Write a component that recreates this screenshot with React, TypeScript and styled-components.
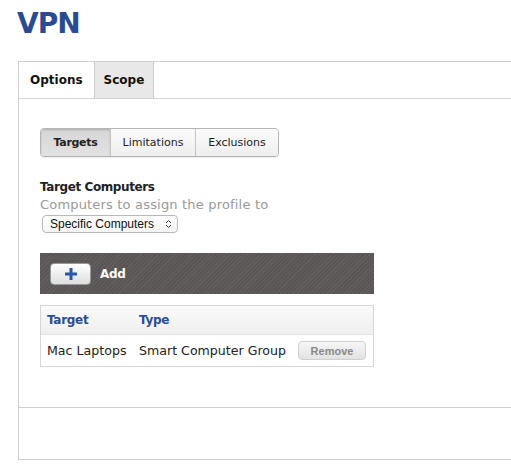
import React from "react";
import styled, { createGlobalStyle } from "styled-components";

const Global = createGlobalStyle`
  html, body { margin: 0; padding: 0; background: #fff; overflow: hidden; }
  body { font-family: "DejaVu Sans", "Open Sans", sans-serif; color: #222; }
`;

const Page = styled.div`
  width: 511px;
  height: 468px;
  overflow: hidden;
`;

const Title = styled.h1`
  margin: 0;
  padding: 9px 0 0 17px;
  height: 61px;
  box-sizing: border-box;
  font-family: "DejaVu Sans", sans-serif;
  font-weight: bold;
  font-size: 28px;
  line-height: 30px;
  color: #2a4b93;
  letter-spacing: -1px;
`;

const Panel = styled.div`
  margin-left: 18px;
  width: 620px;
  border: 1px solid #cfcfcf;
  box-sizing: border-box;
`;

const TabBar = styled.div`
  display: flex;
  height: 37px;
  border-bottom: 1px solid #d4d4d4;
  box-sizing: border-box;
`;

const Tab = styled.div<{ $active?: boolean }>`
  display: flex;
  align-items: center;
  padding: 0 ${(p) => (p.$active ? "11px" : "9px")};
  font-size: 12px;
  font-weight: bold;
  color: #111;
  background: ${(p) => (p.$active ? "#fff" : "#e8e8e8")};
  border-right: 1px solid #cfcfcf;
`;

const Content = styled.div`
  padding: 29px 21px 40px 21px;
  width: 334px;
`;

const Segmented = styled.div`
  display: inline-flex;
  height: 29px;
  border: 1px solid #b5b5b5;
  border-radius: 4px;
  overflow: hidden;
  box-sizing: border-box;
  box-shadow: 0 1px 1px rgba(0, 0, 0, 0.08);
`;

const Segment = styled.div<{ $active?: boolean; $w: number }>`
  width: ${(p) => p.$w}px;
  display: flex;
  align-items: center;
  justify-content: center;
  font-size: 11px;
  font-weight: ${(p) => (p.$active ? "bold" : "normal")};
  letter-spacing: ${(p) => (p.$active ? "-0.3px" : "0")};
  color: #222;
  background: ${(p) =>
    p.$active ? "linear-gradient(#d6d6d6, #e2e2e2)" : "linear-gradient(#fbfbfb, #eeeeee)"};
  box-shadow: ${(p) => (p.$active ? "inset 0 1px 2px rgba(0,0,0,0.18)" : "none")};
  & + & {
    border-left: 1px solid #c4c4c4;
  }
`;

const FieldLabel = styled.div`
  margin-top: 22px;
  font-size: 12px;
  font-weight: bold;
  letter-spacing: -0.4px;
  color: #222;
  line-height: 17px;
`;

const FieldHint = styled.div`
  font-size: 13px;
  letter-spacing: 0.18px;
  color: #999;
  line-height: 17px;
`;

const Select = styled.div`
  margin: 2px 0 0 2px;
  width: 136px;
  height: 18px;
  box-sizing: border-box;
  border: 1px solid #b9b9b9;
  border-radius: 4px;
  background: linear-gradient(#fff, #f4f4f4);
  display: flex;
  align-items: center;
  justify-content: space-between;
  padding: 0 5px 0 7px;
  font-family: "Liberation Sans", Arial, sans-serif;
  font-size: 12px;
  color: #111;
`;

const Toolbar = styled.div`
  margin-top: 20px;
  height: 41px;
  display: flex;
  align-items: center;
  gap: 9px;
  padding-left: 10px;
  background-color: #5a5656;
  background-image: repeating-linear-gradient(
    135deg,
    rgba(255, 255, 255, 0.05) 0px,
    rgba(255, 255, 255, 0.05) 1px,
    transparent 1px,
    transparent 3px
  );
`;

const AddButton = styled.div`
  width: 41px;
  height: 22px;
  box-sizing: border-box;
  border-radius: 4px;
  border: 1px solid #9a9a9a;
  background: linear-gradient(#ffffff, #dedede);
  display: flex;
  align-items: center;
  justify-content: center;
`;

const ToolbarLabel = styled.span`
  font-size: 12px;
  font-weight: bold;
  letter-spacing: -0.3px;
  color: #fff;
`;

const Table = styled.div`
  margin-top: 11px;
  border: 1px solid #d6d6d6;
`;

const Row = styled.div<{ $head?: boolean }>`
  display: grid;
  grid-template-columns: 92px 159px 1fr;
  align-items: center;
  height: ${(p) => (p.$head ? "28px" : "31px")};
  padding-left: 6px;
  background: ${(p) => (p.$head ? "linear-gradient(#fafafa, #efefef)" : "#fff")};
  border-bottom: ${(p) => (p.$head ? "1px solid #e4e4e4" : "none")};
`;

const HeadCell = styled.div`
  font-size: 12px;
  font-weight: bold;
  letter-spacing: -0.3px;
  color: #2a4b93;
`;

const Cell = styled.div`
  font-size: 12.6px;
  color: #222;
  white-space: nowrap;
`;

const RemoveButton = styled.div`
  width: 68px;
  height: 19px;
  box-sizing: border-box;
  border: 1px solid #cfcfcf;
  border-radius: 4px;
  background: linear-gradient(#f6f6f6, #e2e2e2);
  display: flex;
  align-items: center;
  justify-content: center;
  font-family: "Liberation Sans", Arial, sans-serif;
  font-size: 11px;
  font-weight: bold;
  color: #888;
`;

const Footer = styled.div`
  height: 51px;
  border-top: 1px solid #cfcfcf;
`;

export default function App() {
  return (
    <Page>
      <Global />
      <Title>VPN</Title>
      <Panel>
        <TabBar>
          <Tab $active>Options</Tab>
          <Tab>Scope</Tab>
        </TabBar>
        <Content>
          <Segmented>
            <Segment $active $w={69}>Targets</Segment>
            <Segment $w={84}>Limitations</Segment>
            <Segment $w={82}>Exclusions</Segment>
          </Segmented>
          <FieldLabel>Target Computers</FieldLabel>
          <FieldHint>Computers to assign the profile to</FieldHint>
          <Select>
            <span>Specific Computers</span>
            <svg width="7" height="10" viewBox="0 0 7 10">
              <path d="M1 4 L3.5 1.5 L6 4 M1 6 L3.5 8.5 L6 6" fill="none" stroke="#333" strokeWidth="1" />
            </svg>
          </Select>
          <Toolbar>
            <AddButton>
              <svg width="14" height="14" viewBox="0 0 14 14">
                <path d="M7 1 V13 M1 7 H13" stroke="#2a57a8" strokeWidth="3" />
              </svg>
            </AddButton>
            <ToolbarLabel>Add</ToolbarLabel>
          </Toolbar>
          <Table>
            <Row $head>
              <HeadCell>Target</HeadCell>
              <HeadCell>Type</HeadCell>
            </Row>
            <Row>
              <Cell>Mac Laptops</Cell>
              <Cell>Smart Computer Group</Cell>
              <RemoveButton>Remove</RemoveButton>
            </Row>
          </Table>
        </Content>
        <Footer />
      </Panel>
    </Page>
  );
}
